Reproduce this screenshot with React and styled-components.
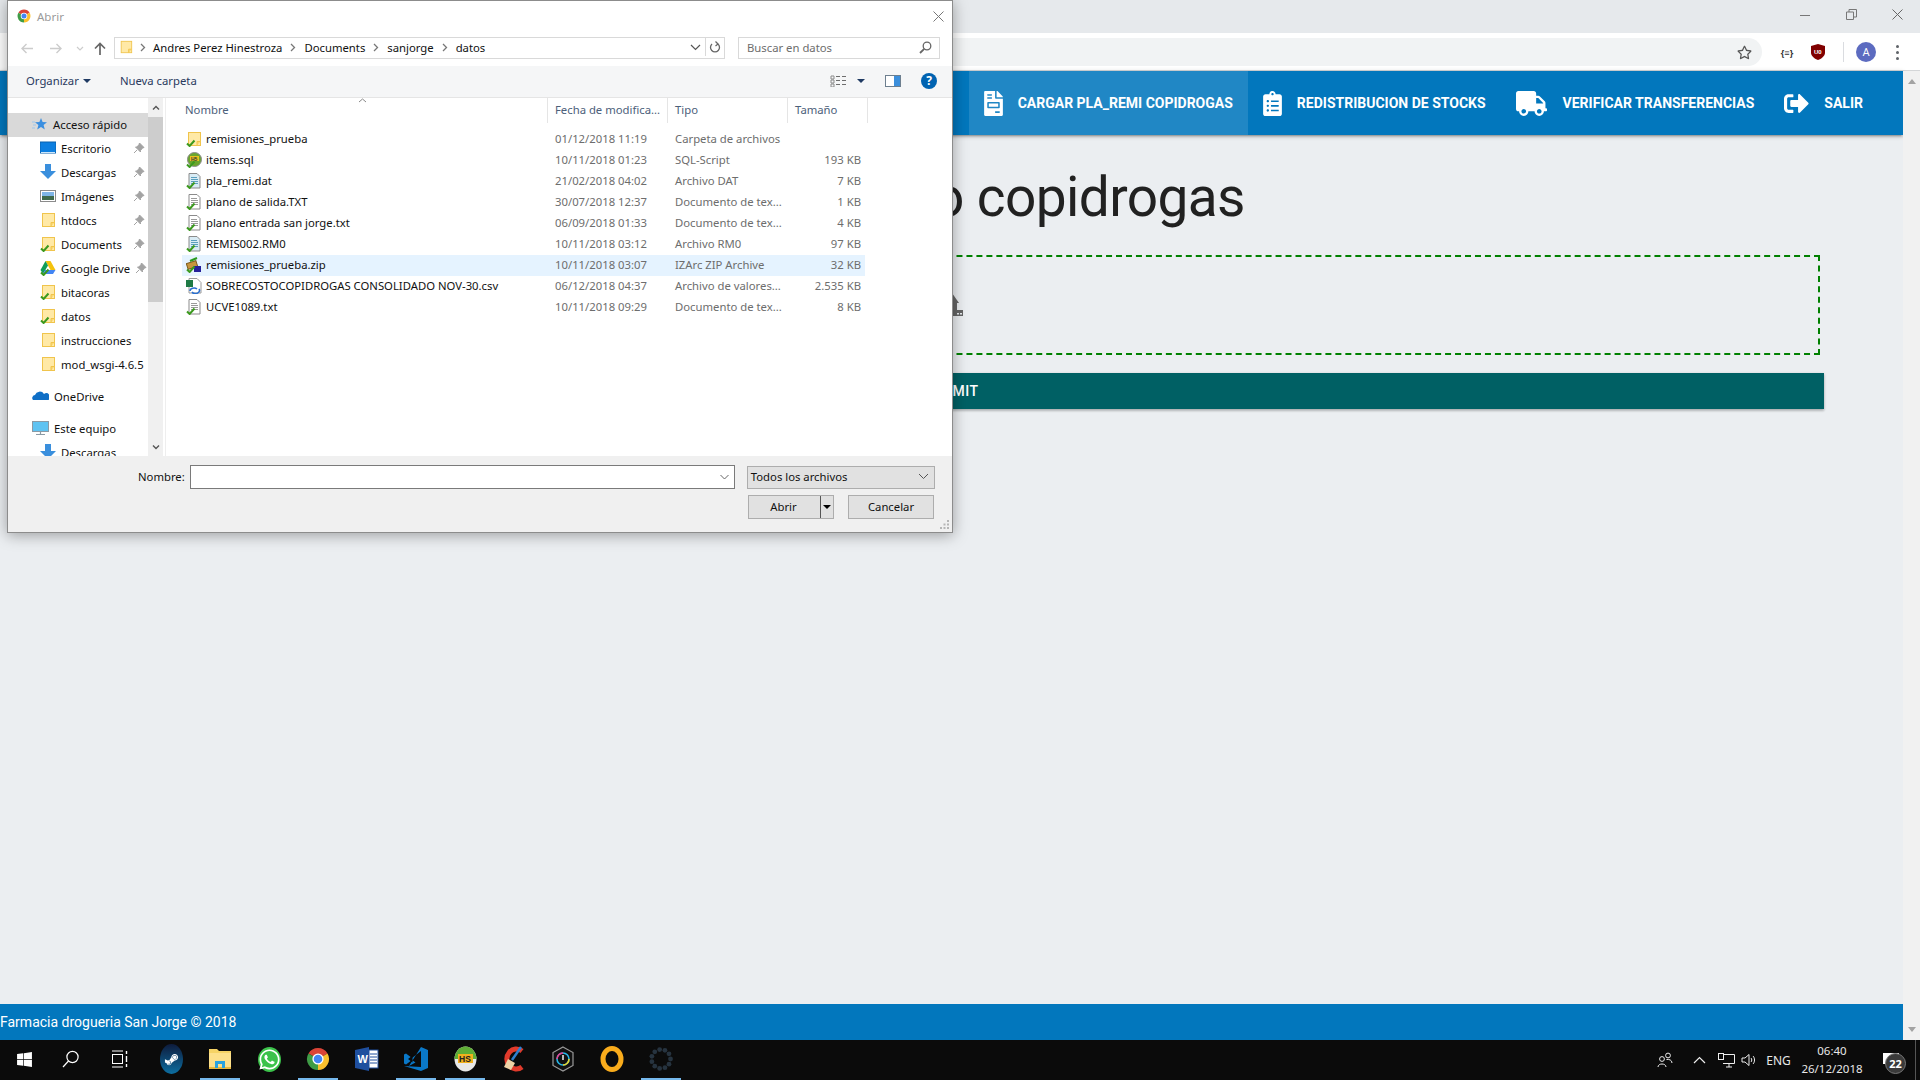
import React from "react"
import styled, { createGlobalStyle } from "styled-components"
import { FaFileInvoice, FaClipboardList, FaTruck, FaSignOutAlt, FaWindows, FaSteamSymbol, FaWhatsapp, FaRegStar } from "react-icons/fa"

const UI = `"Noto Sans", "Open Sans", sans-serif`
const WEB = `Roboto, "Liberation Sans", sans-serif`

const GlobalStyle = createGlobalStyle`
  html, body { margin: 0; padding: 0; overflow: hidden; }
  * { box-sizing: border-box; }
`

const Screen = styled.div`
  position: relative;
  width: 1920px;
  height: 1080px;
  display: flex;
  flex-direction: column;
  overflow: hidden;
  background: #ebeef1;
`

/* ---------- browser ---------- */
const TitleBar = styled.div`
  height: 33px;
  flex: none;
  background: #e6e9ec;
  display: flex;
  justify-content: flex-end;
  align-items: flex-start;
`
const WinButton = styled.div`
  width: 46px;
  height: 29px;
  display: flex;
  align-items: center;
  justify-content: center;
`
const BrowserBar = styled.div`
  height: 38px;
  flex: none;
  background: #fff;
  border-bottom: 1px solid #d4d6d8;
  display: flex;
  align-items: flex-start;
  padding: 5px 0 0 900px;
`
const Omnibox = styled.div`
  width: 862px;
  height: 28px;
  background: #f1f3f4;
  border-radius: 0 14px 14px 0;
  display: flex;
  align-items: center;
  justify-content: flex-end;
  padding-right: 10px;
`
const Extensions = styled.div`
  flex: 1;
  height: 28px;
  display: flex;
  align-items: center;
  padding-left: 18px;
`
const ExtSlot = styled.div`
  width: ${p => p.$w}px;
  display: flex;
  align-items: center;
  justify-content: center;
  flex: none;
`
const BraceText = styled.span`
  font: 700 9px ${UI};
  color: #333;
`
const BarDivider = styled.div`
  width: 1px;
  height: 20px;
  background: #dadce0;
  flex: none;
  margin: 0 12px 0 1px;
`
const Avatar = styled.div`
  width: 20px;
  height: 20px;
  border-radius: 50%;
  background: #5c6bc0;
  color: #fff;
  font: 400 11px ${WEB};
  display: flex;
  align-items: center;
  justify-content: center;
  flex: none;
`
const Kebab = styled.div`
  margin-left: 20px;
  display: flex;
  flex-direction: column;
  gap: 3px;
  span { width: 3px; height: 3px; border-radius: 50%; background: #5f6368; }
`

/* ---------- page ---------- */
const Viewport = styled.div`
  flex: 1;
  display: flex;
  min-height: 0;
`
const Page = styled.div`
  flex: 1;
  display: flex;
  flex-direction: column;
  font-family: ${WEB};
`
const Nav = styled.nav`
  height: 64px;
  flex: none;
  background: #0277bd;
  display: flex;
  justify-content: flex-end;
  padding-right: 25px;
  box-shadow: 0 2px 2px 0 rgba(0,0,0,.14), 0 3px 1px -2px rgba(0,0,0,.12), 0 1px 5px 0 rgba(0,0,0,.2);
`
const NavItem = styled.a`
  display: flex;
  align-items: center;
  gap: ${p => p.$gap}px;
  padding: 0 15px;
  color: #fff;
  font: 700 14px ${WEB};
  white-space: nowrap;
  background: ${p => (p.$active ? "rgba(255,255,255,.12)" : "transparent")};
  svg { height: 25px; width: ${p => p.$icon}px; flex: none; }
`
const Main = styled.main`
  flex: 1;
  padding: 0 79px;
`
const Heading = styled.h2`
  margin: 28px 0 0;
  font: 400 55px/68px ${WEB};
  letter-spacing: -0.6px;
  color: #212121;
  text-align: center;
`
const DropZone = styled.div`
  margin: 24px 4px 0 0;
  height: 100px;
  border: 2px dashed #008000;
  display: flex;
  align-items: center;
  justify-content: center;
  padding-left: 5px;
`
const Submit = styled.button`
  display: block;
  width: 100%;
  height: 36px;
  margin-top: 18px;
  border: none;
  background: #006064;
  color: #fff;
  font: 500 14px ${WEB};
  letter-spacing: .5px;
  box-shadow: 0 2px 2px 0 rgba(0,0,0,.14), 0 1px 3px 0 rgba(0,0,0,.2);
`
const Footer = styled.footer`
  height: 36px;
  flex: none;
  background: #0277bd;
  color: #fff;
  font: 400 14px ${WEB};
  display: flex;
  align-items: center;
`
const PageScroll = styled.div`
  width: 17px;
  flex: none;
  background: #f1f1f1;
  display: flex;
  flex-direction: column;
  align-items: center;
  justify-content: space-between;
  padding: 8px 0;
`
const ScrollArrow = styled.div`
  width: 0;
  height: 0;
  border-left: 4px solid transparent;
  border-right: 4px solid transparent;
  ${p => (p.$down ? "border-top: 5px solid #a3a3a3;" : "border-bottom: 5px solid #a3a3a3;")}
`

/* ---------- taskbar ---------- */
const Taskbar = styled.div`
  height: 40px;
  flex: none;
  background: #0b0b0b;
  display: flex;
  align-items: stretch;
  gap: 9px;
  padding-left: 4px;
  color: #e8e8e8;
  font: 400 12px ${UI};
`
const TaskButton = styled.div`
  width: 40px;
  flex: none;
  display: flex;
  align-items: center;
  justify-content: center;
  padding-right: ${p => p.$nudge || 0}px;
  border-bottom: 2px solid ${p => (p.$open ? "#76b9ed" : "transparent")};
`
const Tray = styled.div`
  margin-left: auto;
  display: flex;
  align-items: center;
  border-right: 1px solid #555;
  margin-right: 4px;
`
const TraySlot = styled.div`
  width: ${p => p.$w}px;
  flex: none;
  display: flex;
  align-items: center;
  justify-content: center;
  position: relative;
`
const Clock = styled.div`
  width: 70px;
  flex: none;
  text-align: center;
  font-size: 11.5px;
  line-height: 18px;
`
const Badge = styled.div`
  position: absolute;
  left: 18px;
  top: 0;
  width: 21px;
  height: 21px;
  border-radius: 50%;
  background: #3a3a3a;
  border: 1px solid #777;
  color: #fff;
  font: 700 11px/19px ${UI};
  text-align: center;
`

/* ---------- dialog ---------- */
const Dialog = styled.div`
  position: absolute;
  left: 7px;
  top: 0;
  width: 946px;
  height: 533px;
  background: #fff;
  border: 1px solid #8c8c8c;
  box-shadow: 0 2px 14px rgba(0,0,0,.35);
  display: flex;
  flex-direction: column;
  font: 400 11.3px ${UI};
  color: #111;
`
const DialogTitle = styled.div`
  height: 32px;
  flex: none;
  display: flex;
  align-items: center;
  padding: 0 8px 2px 9px;
  gap: 6px;
  color: #9a9a9a;
  font-size: 11.5px;
`
const CloseMark = styled.div`
  margin-left: auto;
  display: flex;
`
const AddressRow = styled.div`
  height: 33px;
  flex: none;
  display: flex;
  align-items: flex-start;
  padding-top: 4px;
`
const NavArrows = styled.div`
  width: 106px;
  height: 22px;
  flex: none;
  display: flex;
  align-items: center;
  padding-left: 10px;
`
const ArrowSlot = styled.div`
  width: ${p => p.$w}px;
  flex: none;
  display: flex;
  align-items: center;
  justify-content: center;
`
const Crumbs = styled.div`
  width: 611px;
  height: 22px;
  flex: none;
  border: 1px solid #d9d9d9;
  display: flex;
  align-items: center;
  padding: 0 0 2px 4px;
`
const CrumbSep = styled.div`
  width: ${p => p.$w || 22}px;
  flex: none;
  display: flex;
  justify-content: center;
`
const CrumbTail = styled.div`
  margin-left: auto;
  display: flex;
  align-items: center;
  height: 100%;
`
const CrumbTool = styled.div`
  width: ${p => p.$w}px;
  height: 100%;
  display: flex;
  align-items: center;
  justify-content: center;
  border-left: ${p => (p.$line ? "1px solid #d9d9d9" : "none")};
`
const SearchBox = styled.div`
  width: 202px;
  height: 22px;
  flex: none;
  margin-left: 13px;
  border: 1px solid #d9d9d9;
  display: flex;
  align-items: center;
  justify-content: space-between;
  padding: 0 7px 2px 8px;
  color: #6d6d6d;
`
const CommandBar = styled.div`
  height: 32px;
  flex: none;
  background: #f5f6f7;
  border-bottom: 1px solid #e5e5e5;
  display: flex;
  align-items: center;
  padding: 0 0 2px 18px;
  color: #2a3a5e;
`
const CommandLabel = styled.span`
  display: flex;
  align-items: center;
  gap: 4px;
  margin-right: ${p => p.$mr || 0}px;
`
const CommandTools = styled.div`
  margin-left: auto;
  display: flex;
  align-items: center;
  padding-right: 15px;
`
const DownCaret = styled.span`
  width: 0;
  height: 0;
  border-left: 4px solid transparent;
  border-right: 4px solid transparent;
  border-top: 4px solid ${p => p.$color || "#1f3a63"};
`
const HelpDot = styled.div`
  width: 16px;
  height: 16px;
  border-radius: 50%;
  background: #0063b1;
  color: #fff;
  font: 700 12px/16px ${UI};
  text-align: center;
`
const Middle = styled.div`
  flex: 1;
  display: flex;
  min-height: 0;
`
const Sidebar = styled.div`
  width: 140px;
  flex: none;
  overflow: hidden;
  padding-top: 15px;
`
const SideRow = styled.div`
  height: 24px;
  display: flex;
  align-items: center;
  white-space: nowrap;
  gap: 5px;
  padding: 0 3px 2px ${p => (p.$child ? 32 : 24)}px;
  margin-top: ${p => p.$gap || 0}px;
  background: ${p => (p.$on ? "#d9d9d9" : "transparent")};
  color: #111;
  svg { flex: none; }
`
const PinSlot = styled.span`
  margin-left: auto;
  display: flex;
`
const SideScroll = styled.div`
  width: 15px;
  flex: none;
  background: #f0f0f0;
  display: flex;
  flex-direction: column;
  align-items: center;
  justify-content: space-between;
  padding-bottom: 5px;
`
const SideThumb = styled.div`
  width: 15px;
  height: 185px;
  background: #cdcdcd;
`
const ThumbGroup = styled.div`
  display: flex;
  flex-direction: column;
  align-items: center;
  gap: 5px;
  padding-top: 6px;
`
const Chevron = styled.div`
  display: flex;
`
const FilePane = styled.div`
  flex: 1;
  margin-left: 2px;
  border-left: 1px solid #eeeeee;
  min-width: 0;
`
const ColHeads = styled.div`
  height: 25px;
  display: grid;
  grid-template-columns: 382px 120px 120px 80px;
  color: #4c607a;
`
const ColHead = styled.div`
  position: relative;
  display: flex;
  align-items: center;
  padding: 0 0 2px ${p => p.$pad || 7}px;
  border-right: 1px solid #e5e5e5;
  white-space: nowrap;
`
const SortMark = styled.div`
  position: absolute;
  left: 192px;
  top: 0;
  display: flex;
`
const FileList = styled.div`
  padding: 6px 0 0 16px;
`
const FileRow = styled.div`
  width: 683px;
  height: 21px;
  display: grid;
  grid-template-columns: 369px 120px 120px 66px;
  align-items: center;
  padding: 0 0 2px 4px;
  background: ${p => (p.$sel ? "#e5f3ff" : "transparent")};
  white-space: nowrap;
`
const NameCell = styled.div`
  display: flex;
  align-items: center;
  gap: 4px;
  color: #111;
`
const Muted = styled.div`
  color: #6d6d6d;
  text-align: ${p => (p.$right ? "right" : "left")};
`
const BottomPanel = styled.div`
  height: 76px;
  flex: none;
  background: #f0f0f0;
  position: relative;
  padding: 9px 0 0 130px;
`
const NameLine = styled.div`
  display: flex;
  align-items: center;
  gap: 5px;
`
const NameLabel = styled.span`
  padding-bottom: 2px;
`
const NameInput = styled.div`
  width: 545px;
  height: 24px;
  background: #fff;
  border: 1px solid #7a7a7a;
  display: flex;
  align-items: center;
  justify-content: flex-end;
  padding-right: 5px;
`
const TypeSelect = styled.div`
  width: 188px;
  height: 23px;
  margin-left: 7px;
  background: #e1e1e1;
  border: 1px solid #adadad;
  display: flex;
  align-items: center;
  justify-content: space-between;
  padding: 0 5px 2px 3px;
`
const ButtonLine = styled.div`
  display: flex;
  justify-content: flex-end;
  gap: 14px;
  margin-top: 6px;
  padding-right: 18px;
`
const DlgButton = styled.div`
  width: 86px;
  height: 24px;
  background: #e1e1e1;
  border: 1px solid #adadad;
  display: flex;
  align-items: center;
  justify-content: center;
  padding-bottom: ${p => (p.$split ? 0 : 2)}px;
`
const SplitLabel = styled.div`
  flex: 1;
  text-align: center;
  padding: 0 2px 2px 0;
`
const SplitArrow = styled.div`
  width: 13px;
  height: 100%;
  border-left: 1px solid #555;
  display: flex;
  align-items: center;
  justify-content: center;
`
const Grip = styled.div`
  position: absolute;
  right: 2px;
  bottom: 2px;
  display: flex;
`

/* ---------- small drawings ---------- */
const Check = () => (
  <path d="M1 12.5 L3.6 15 L8.5 9.5" fill="none" stroke="#3c9a1f" strokeWidth="2" />
)

const Folder = ({ check, size = 16 }) => (
  <svg width={size} height={size} viewBox="0 0 16 16">
    <rect x="2.5" y="1.5" width="12" height="13" fill="#ffe9a6" stroke="#f0c44c" />
    <path d="M11 14.5 V10.5 H14.5" fill="#fbd872" stroke="#f0c44c" />
    {check && <Check />}
  </svg>
)

const Doc = ({ tone = "plain" }) => (
  <svg width="16" height="16" viewBox="0 0 16 16">
    <path d="M3 .5 H11 L14 3.5 V15 H3 Z" fill={tone === "plain" ? "#fff" : "#d9ecf5"} stroke="#8b8b8b" />
    <path d="M5 4.500 H11 M5 6.500 H12 M5 8.500 H12 M5 10.500 H12" stroke={tone === "plain" ? "#9a9a9a" : "#5a9fbe"} />
    <Check />
  </svg>
)

const SqlIcon = () => (
  <svg width="16" height="16" viewBox="0 0 16 16">
    <circle cx="8.5" cy="7.5" r="7" fill="#6aa52c" stroke="#8b8b8b" />
    <rect x="4" y="4" width="9" height="5" fill="#e9c21c" />
    <text x="5" y="8.5" fontSize="5" fontFamily="Liberation Sans" fontWeight="700" fill="#333">H5</text>
    <Check />
  </svg>
)

const ZipIcon = () => (
  <svg width="16" height="16" viewBox="0 0 16 16">
    <rect x="1" y="5" width="10" height="6" fill="#c8963e" stroke="#7b5a1d" transform="rotate(-18 6 8)" />
    <rect x="8" y="9" width="7" height="6" fill="#25209b" />
    <path d="M4 4 L11 1" stroke="#2b9a1f" strokeWidth="2" />
    <Check />
  </svg>
)

const CsvIcon = () => (
  <svg width="16" height="16" viewBox="0 0 16 16">
    <path d="M3 .5 H11 L15 4.5 V15 H3 Z" fill="#fff" stroke="#9a9a9a" />
    <rect x="0" y="2" width="7" height="7" fill="#1f7a45" />
    <path d="M4 13 a4 3 0 0 1 7 -2 M13 11 a4 3 0 0 1 -7 3" fill="none" stroke="#2a6fd0" strokeWidth="1.6" />
  </svg>
)

const fileIcons = { folder: <Folder check />, sql: <SqlIcon />, dat: <Doc tone="blue" />, txt: <Doc />, zip: <ZipIcon />, csv: <CsvIcon /> }

const ChromeLogo = ({ size }) => (
  <svg width={size} height={size} viewBox="0 0 24 24">
    <path d="M12 12 L2.47 6.5 A11 11 0 0 1 21.53 6.5 Z" fill="#db4437" />
    <path d="M12 12 L21.53 6.5 A11 11 0 0 1 12 23 Z" fill="#fbc02d" />
    <path d="M12 12 L12 23 A11 11 0 0 1 2.47 6.5 Z" fill="#3f9c46" />
    <circle cx="12" cy="12" r="5.6" fill="#fff" />
    <circle cx="12" cy="12" r="4.3" fill="#4285f4" />
  </svg>
)

const Stroke = ({ w = 16, h = 16, d, color = "#666", sw = 1.2 }) => (
  <svg width={w} height={h} viewBox={`0 0 ${w} ${h}`}>
    <path d={d} fill="none" stroke={color} strokeWidth={sw} />
  </svg>
)

const Pin = () => (
  <svg width="12" height="12" viewBox="0 0 12 12">
    <path d="M6.5 1 L11 5.5 L9.5 6 L7.5 8.5 L7.5 10 L2.5 5 L4 5 L6 2.5 Z M4 8 L1 11" fill="#a3a3a3" stroke="#a3a3a3" />
  </svg>
)

const QuickStar = () => (
  <svg width="16" height="16" viewBox="0 0 16 16">
    <path d="M9 2 L10.6 6 L15 6.3 L11.6 9 L12.8 13.5 L9 11 L5.2 13.5 L6.4 9 L3 6.3 L7.4 6 Z" fill="#3b8fe0" />
    <path d="M0 6 H3 M1 9 H4 M0 12 H3" stroke="#9cc7ee" />
  </svg>
)
const DesktopIcon = () => (
  <svg width="16" height="16" viewBox="0 0 16 16">
    <rect x="0" y="2" width="16" height="11" fill="#0d7fe0" stroke="#0a62ad" />
    <rect x="1" y="12" width="14" height="1" fill="#cde6fa" />
  </svg>
)
const DownloadIcon = () => (
  <svg width="16" height="16" viewBox="0 0 16 16">
    <path d="M5 0 H11 V7 H16 L8 15 L0 7 H5 Z" fill="#3a8fdd" />
  </svg>
)
const ImagesIcon = () => (
  <svg width="16" height="16" viewBox="0 0 16 16">
    <rect x="0.5" y="2.5" width="15" height="11" fill="#fff" stroke="#8b8b8b" />
    <rect x="2" y="4" width="12" height="4" fill="#7fb5e6" />
    <rect x="2" y="8" width="12" height="4" fill="#3f6a4c" />
  </svg>
)
const DriveIcon = () => (
  <svg width="16" height="16" viewBox="0 0 16 16">
    <path d="M5.5 1 H10.500 L15.500 10 H10.500 Z" fill="#f4c20d" />
    <path d="M5.5 1 L8 5.5 L3 14 L0.5 10 Z" fill="#0f9d58" />
    <path d="M5 10 H15.500 L13 14 H3 Z" fill="#4285f4" />
    <Check />
  </svg>
)
const CloudIcon = () => (
  <svg width="17" height="16" viewBox="0 0 17 16">
    <path d="M1 12 a3 3 0 0 1 2 -5 a5 5 0 0 1 9 -1 a3.500 3.500 0 0 1 4.500 6 Z" fill="#0f6fc6" />
  </svg>
)
const PcIcon = () => (
  <svg width="17" height="16" viewBox="0 0 17 16">
    <rect x="0.5" y="1.5" width="16" height="10" fill="#5fc3f2" stroke="#8b9aa5" />
    <path d="M8.500 12 V14 M4 14.500 H13" stroke="#8b9aa5" strokeWidth="1.2" />
  </svg>
)

const ViewIcon = () => (
  <svg width="16" height="12" viewBox="0 0 16 12">
    <path d="M1 1 H4 V4 H1 Z M1 5 H4 V8 H1 Z M1 9 H4 V12 H1 Z" fill="none" stroke="#8b8b8b" />
    <path d="M6 1.500 H10 M12 1.500 H16 M6 5.500 H10 M12 5.500 H16 M6 9.500 H10 M12 9.500 H16" stroke="#6d6d6d" />
  </svg>
)
const PaneIcon = () => (
  <svg width="16" height="12" viewBox="0 0 16 12">
    <rect x="0.5" y="0.5" width="15" height="11" fill="#fff" stroke="#6d7f8f" />
    <rect x="9" y="1" width="6" height="10" fill="#3c8fdc" />
  </svg>
)

const SearchGlyph = () => (
  <svg width="13" height="13" viewBox="0 0 13 13">
    <circle cx="8" cy="5" r="3.8" fill="none" stroke="#666" strokeWidth="1.3" />
    <path d="M5.2 7.8 L1 12" stroke="#666" strokeWidth="1.8" />
  </svg>
)

/* taskbar drawings */
const TaskSearch = () => (
  <svg width="18" height="18" viewBox="0 0 18 18">
    <circle cx="10.5" cy="7" r="5.6" fill="none" stroke="#fff" strokeWidth="1.2" />
    <path d="M6.5 11 L1 17" stroke="#fff" strokeWidth="1.2" />
  </svg>
)
const TaskView = () => (
  <svg width="17" height="18" viewBox="0 0 17 18">
    <path d="M1 1 H12 M1 17 H12" stroke="#fff" />
    <rect x="1.5" y="4.5" width="10" height="9" fill="none" stroke="#fff" />
    <path d="M15.5 1 V4 M15.5 6 V12 M15.5 14 V17" stroke="#fff" strokeWidth="1.4" />
  </svg>
)
const SteamBadge = styled.div`
  width: 23px;
  height: 30px;
  border-radius: 50%;
  background: linear-gradient(#0e1b3c, #0c6ea0);
  display: flex;
  align-items: center;
  justify-content: center;
  color: #fff;
  font-size: 15px;
`
const ExplorerIcon = () => (
  <svg width="22" height="24" viewBox="0 0 22 24">
    <path d="M0 2 H8 L10 4 H22 V22 H0 Z" fill="#f6d365" />
    <rect x="0" y="6" width="22" height="16" fill="#fde08a" />
    <rect x="0" y="20" width="22" height="2" fill="#e8b93f" />
    <path d="M6 21 V14 H16 V21 H13 V17 H9 V21 Z" fill="#2aa3e0" />
  </svg>
)
const WhatsBadge = styled.div`
  width: 23px;
  height: 25px;
  border-radius: 50%;
  background: #3bc24a;
  color: #fff;
  font-size: 23px;
  display: flex;
  align-items: center;
  justify-content: center;
`
const WordIcon = () => (
  <svg width="24" height="24" viewBox="0 0 24 24">
    <path d="M0 3 L14 0 V24 L0 21 Z" fill="#1f4f9e" />
    <rect x="14" y="3" width="9" height="18" fill="#fff" stroke="#1f4f9e" />
    <path d="M15 7 H22 M15 10 H22 M15 13 H22 M15 16 H22" stroke="#1f4f9e" />
    <text x="2.5" y="16" fontSize="11" fontFamily="Liberation Sans" fontWeight="700" fill="#fff">W</text>
  </svg>
)
const CodeIcon = () => (
  <svg width="24" height="24" viewBox="0 0 24 24">
    <path d="M17 0 L24 3 V21 L17 24 L0 19 L17 20 V4 L8 11 L2 6.5 L0 7.5 V16.5 L2 17.5 L8 13 L11.5 15.5 L5 19" fill="#0a78c8" stroke="none" />
    <path d="M4 12 L8.5 8.5 V15.5 Z" fill="#0b0b0b" />
  </svg>
)
const HsIcon = () => (
  <svg width="23" height="26" viewBox="0 0 23 26">
    <ellipse cx="11.5" cy="13" rx="11" ry="12.5" fill="#e8e8e8" />
    <path d="M.5 13 A11 12.5 0 0 1 22.5 13 Z" fill="#5fae36" />
    <rect x="4" y="8" width="15" height="9" fill="#f2b11d" />
    <text x="5" y="15.6" fontSize="8.5" fontFamily="Liberation Sans" fontWeight="700" fill="#222">HS</text>
  </svg>
)
const CleanerIcon = () => (
  <svg width="22" height="26" viewBox="0 0 22 26">
    <path d="M19 5 A9.5 10 0 1 0 19 21" fill="none" stroke="#e13a2b" strokeWidth="5" />
    <path d="M18 1 L9 14" stroke="#2e7fd0" strokeWidth="2.5" />
    <path d="M5 13 L12 17 L8 24 L1 21 Z" fill="#efd3a6" />
  </svg>
)
const CorsairIcon = () => (
  <svg width="22" height="26" viewBox="0 0 22 26">
    <path d="M11 1 L21 6.5 V19.5 L11 25 L1 19.5 V6.5 Z" fill="#111" stroke="#9a9a9a" strokeWidth="1.2" />
    <circle cx="11" cy="13" r="6" fill="none" stroke="#28b6e8" strokeWidth="1.6" />
    <path d="M5 13 A6 6 0 0 1 11 7" fill="none" stroke="#e8408f" strokeWidth="1.6" />
    <path d="M11 19 A6 6 0 0 0 17 13" fill="none" stroke="#e8d52c" strokeWidth="1.6" />
    <path d="M11 9 V14" stroke="#fff" strokeWidth="1.4" />
  </svg>
)
const RingIcon = () => (
  <svg width="24" height="26" viewBox="0 0 24 26">
    <ellipse cx="12" cy="13" rx="9" ry="10.5" fill="none" stroke="#f9ac1c" strokeWidth="5" />
  </svg>
)
const SpinnerIcon = () => (
  <svg width="24" height="24" viewBox="0 0 24 24">
    {[...Array(11)].map((_, i) => {
      const a = (i / 11) * Math.PI * 2
      return <circle key={i} cx={12 + 9.5 * Math.cos(a)} cy={12 + 9.5 * Math.sin(a)} r="2.4" fill="#26333f" />
    })}
  </svg>
)

/* tray drawings */
const PeopleIcon = () => (
  <svg width="16" height="16" viewBox="0 0 16 16">
    <circle cx="5" cy="7" r="2.4" fill="none" stroke="#eee" />
    <path d="M1 15 C1 11 9 11 9 15" fill="none" stroke="#eee" />
    <circle cx="11" cy="3.5" r="2.4" fill="none" stroke="#eee" />
    <path d="M9.5 7.5 C12 7 15 8 15 11" fill="none" stroke="#eee" />
  </svg>
)
const NetIcon = () => (
  <svg width="17" height="15" viewBox="0 0 17 15">
    <path d="M4 1.5 H16.5 V10.5 H5 M8 14 H14 M11 10.5 V14" fill="none" stroke="#eee" />
    <rect x="0.5" y="0.5" width="5" height="6" fill="#0b0b0b" stroke="#eee" />
  </svg>
)
const VolumeIcon = () => (
  <svg width="16" height="14" viewBox="0 0 16 14">
    <path d="M1 5 H4 L8 1.5 V12.5 L4 9 H1 Z M10 5 C11 6 11 8 10 9 M12 3 C14 5 14 9 12 11" fill="none" stroke="#eee" />
  </svg>
)

const sideRows = [
  { label: "Acceso rápido", icon: <QuickStar />, on: true },
  { label: "Escritorio", icon: <DesktopIcon />, child: true, pin: true },
  { label: "Descargas", icon: <DownloadIcon />, child: true, pin: true },
  { label: "Imágenes", icon: <ImagesIcon />, child: true, pin: true },
  { label: "htdocs", icon: <Folder />, child: true, pin: true },
  { label: "Documents", icon: <Folder check />, child: true, pin: true },
  { label: "Google Drive", icon: <DriveIcon />, child: true, pin: true },
  { label: "bitacoras", icon: <Folder check />, child: true },
  { label: "datos", icon: <Folder check />, child: true },
  { label: "instrucciones", icon: <Folder />, child: true },
  { label: "mod_wsgi-4.6.5", icon: <Folder />, child: true },
  { label: "OneDrive", icon: <CloudIcon />, gap: 8 },
  { label: "Este equipo", icon: <PcIcon />, gap: 8 },
  { label: "Descargas", icon: <DownloadIcon />, child: true },
]

const files = [
  { name: "remisiones_prueba", icon: "folder", date: "01/12/2018 11:19", type: "Carpeta de archivos", size: "" },
  { name: "items.sql", icon: "sql", date: "10/11/2018 01:23", type: "SQL-Script", size: "193 KB" },
  { name: "pla_remi.dat", icon: "dat", date: "21/02/2018 04:02", type: "Archivo DAT", size: "7 KB" },
  { name: "plano de salida.TXT", icon: "txt", date: "30/07/2018 12:37", type: "Documento de tex...", size: "1 KB" },
  { name: "plano entrada san jorge.txt", icon: "txt", date: "06/09/2018 01:33", type: "Documento de tex...", size: "4 KB" },
  { name: "REMIS002.RM0", icon: "dat", date: "10/11/2018 03:12", type: "Archivo RM0", size: "97 KB" },
  { name: "remisiones_prueba.zip", icon: "zip", date: "10/11/2018 03:07", type: "IZArc ZIP Archive", size: "32 KB", sel: true },
  { name: "SOBRECOSTOCOPIDROGAS CONSOLIDADO NOV-30.csv", icon: "csv", date: "06/12/2018 04:37", type: "Archivo de valores...", size: "2.535 KB" },
  { name: "UCVE1089.txt", icon: "txt", date: "10/11/2018 09:29", type: "Documento de tex...", size: "8 KB" },
]

const crumbs = ["Andres Perez Hinestroza", "Documents", "sanjorge", "datos"]

const taskItems = [
  { icon: <FaWindows size={17} color="#fff" /> },
  { icon: <TaskSearch />, nudge: 4 },
  { icon: <TaskView />, nudge: 6 },
  { icon: <SteamBadge><FaSteamSymbol /></SteamBadge> },
  { icon: <ExplorerIcon />, open: true },
  { icon: <WhatsBadge><FaWhatsapp /></WhatsBadge> },
  { icon: <ChromeLogo size={24} />, open: true },
  { icon: <WordIcon /> },
  { icon: <CodeIcon />, open: true },
  { icon: <HsIcon />, open: true },
  { icon: <CleanerIcon /> },
  { icon: <CorsairIcon /> },
  { icon: <RingIcon /> },
  { icon: <SpinnerIcon />, open: true },
]

const smallChevron = <Stroke w={8} h={8} d="M1 5.5 L4 2.5 L7 5.5" color="#555" sw={1.4} />
const crumbArrow = <Stroke w={6} h={9} d="M1 1 L4.5 4.5 L1 8" color="#777" sw={1.3} />
const downChevron = <Stroke w={11} h={7} d="M1 1 L5.5 5.5 L10 1" color="#555" sw={1.2} />

export default function App() {
  return (
    <Screen>
      <GlobalStyle />
      <TitleBar>
        <WinButton><Stroke w={10} h={10} d="M0 5.5 H10" color="#777" sw={1} /></WinButton>
        <WinButton><Stroke w={11} h={11} d="M.5 3 H7.5 V10.5 H.5 Z M3 3 V.5 H10.5 V8 H7.5" color="#777" sw={1} /></WinButton>
        <WinButton><Stroke w={11} h={11} d="M.5 .5 L10.5 10.5 M10.5 .5 L.5 10.5" color="#666" sw={1} /></WinButton>
      </TitleBar>
      <BrowserBar>
        <Omnibox><FaRegStar size={15} color="#555" /></Omnibox>
        <Extensions>
          <ExtSlot $w={14}><BraceText>{"{≡}"}</BraceText></ExtSlot>
          <ExtSlot $w={48}>
            <svg width="14" height="16" viewBox="0 0 14 16">
              <path d="M7 0 L14 2 V9 C14 12 10 15 7 16 C4 15 0 12 0 9 V2 Z" fill="#800000" />
              <text x="3" y="9.5" fontSize="6" fontFamily="Liberation Sans" fontWeight="700" fill="#fff">U0</text>
            </svg>
          </ExtSlot>
          <BarDivider />
          <Avatar>A</Avatar>
          <Kebab><span /><span /><span /></Kebab>
        </Extensions>
      </BrowserBar>

      <Viewport>
        <Page>
          <Nav>
            <NavItem $active $gap={15} $icon={19}><FaFileInvoice />CARGAR PLA_REMI COPIDROGAS</NavItem>
            <NavItem $gap={15} $icon={19}><FaClipboardList />REDISTRIBUCION DE STOCKS</NavItem>
            <NavItem $gap={16} $icon={31}><FaTruck />VERIFICAR TRANSFERENCIAS</NavItem>
            <NavItem $gap={15} $icon={25}><FaSignOutAlt />SALIR</NavItem>
          </Nav>
          <Main>
            <Heading>Cargar plano copidrogas</Heading>
            <DropZone>
              <svg width="24" height="24" viewBox="0 0 24 24">
                <path d="M12 0 L19 10 H17 V17 H7 V10 H5 Z M1 17 H23 V23 H1 Z" fill="#666" />
                <path d="M17 20 H19 V21.500 H17 Z M20 20 H22 V21.500 H20 Z" fill="#eaeef1" />
              </svg>
            </DropZone>
            <Submit>SUBMIT</Submit>
          </Main>
          <Footer>Farmacia drogueria San Jorge © 2018</Footer>
        </Page>
        <PageScroll>
          <ScrollArrow />
          <ScrollArrow $down />
        </PageScroll>
      </Viewport>

      <Taskbar>
        {taskItems.map((t, i) => <TaskButton key={i} $open={t.open} $nudge={t.nudge}>{t.icon}</TaskButton>)}
        <Tray>
          <TraySlot $w={41}><PeopleIcon /></TraySlot>
          <TraySlot $w={29}><Stroke w={13} h={8} d="M1 7 L6.5 1.5 L12 7" color="#eee" sw={1.2} /></TraySlot>
          <TraySlot $w={24}><NetIcon /></TraySlot>
          <TraySlot $w={22}><VolumeIcon /></TraySlot>
          <TraySlot $w={37}>ENG</TraySlot>
          <Clock>06:40<br />26/12/2018</Clock>
          <TraySlot $w={48}>
            <svg width="16" height="14" viewBox="0 0 16 14">
              <path d="M0 0 H16 V11 H8 L5 14 V11 H0 Z" fill="#fff" />
            </svg>
            <Badge>22</Badge>
          </TraySlot>
        </Tray>
      </Taskbar>

      <Dialog>
        <DialogTitle>
          <ChromeLogo size={14} />
          Abrir
          <CloseMark><Stroke w={11} h={11} d="M.5 .5 L10.5 10.5 M10.5 .5 L.5 10.5" color="#777" sw={1} /></CloseMark>
        </DialogTitle>
        <AddressRow>
          <NavArrows>
            <ArrowSlot $w={18}><Stroke w={13} h={11} d="M12 5.5 H1 M5.5 1 L1 5.5 L5.5 10" color="#ccc" sw={1.4} /></ArrowSlot>
            <ArrowSlot $w={38}><Stroke w={13} h={11} d="M1 5.5 H12 M7.5 1 L12 5.5 L7.5 10" color="#ccc" sw={1.4} /></ArrowSlot>
            <ArrowSlot $w={12}><Stroke w={8} h={5} d="M1 1 L4 4 L7 1" color="#ccc" sw={1.2} /></ArrowSlot>
            <ArrowSlot $w={28}><Stroke w={12} h={13} d="M6 13 V1.5 M1 6.5 L6 1.5 L11 6.5" color="#666" sw={1.7} /></ArrowSlot>
          </NavArrows>
          <Crumbs>
            <Folder size={14} />
            <CrumbSep $w={20}>{crumbArrow}</CrumbSep>
            {crumbs.map((c, i) => (
              <React.Fragment key={c}>
                {i > 0 && <CrumbSep>{crumbArrow}</CrumbSep>}
                <span>{c}</span>
              </React.Fragment>
            ))}
            <CrumbTail>
              <CrumbTool $w={19}>{downChevron}</CrumbTool>
              <CrumbTool $w={19} $line>
                <Stroke w={12} h={12} d="M3 3 A4.5 4.5 0 1 0 9 3 M6.5 .5 L9 3 L6.5 5" color="#666" sw={1.3} />
              </CrumbTool>
            </CrumbTail>
          </Crumbs>
          <SearchBox>Buscar en datos<SearchGlyph /></SearchBox>
        </AddressRow>
        <CommandBar>
          <CommandLabel $mr={29}>Organizar<DownCaret /></CommandLabel>
          <CommandLabel>Nueva carpeta</CommandLabel>
          <CommandTools>
            <ViewIcon />
            <ArrowSlot $w={29}><DownCaret /></ArrowSlot>
            <ArrowSlot $w={10} />
            <ArrowSlot $w={16}><PaneIcon /></ArrowSlot>
            <ArrowSlot $w={20} />
            <HelpDot>?</HelpDot>
          </CommandTools>
        </CommandBar>
        <Middle>
          <Sidebar>
            {sideRows.map((r, i) => (
              <SideRow key={i} $child={r.child} $on={r.on} $gap={r.gap}>
                {r.icon}
                {r.label}
                {r.pin && <PinSlot><Pin /></PinSlot>}
              </SideRow>
            ))}
          </Sidebar>
          <SideScroll>
            <ThumbGroup>
              <Chevron>{smallChevron}</Chevron>
              <SideThumb />
            </ThumbGroup>
            <Chevron>
              <Stroke w={8} h={8} d="M1 2.5 L4 5.5 L7 2.5" color="#555" sw={1.4} />
            </Chevron>
          </SideScroll>
          <FilePane>
            <ColHeads>
              <ColHead $pad={19}>
                Nombre
                <SortMark><Stroke w={9} h={5} d="M1 4 L4.5 1 L8 4" color="#888" sw={1} /></SortMark>
              </ColHead>
              <ColHead>Fecha de modifica...</ColHead>
              <ColHead>Tipo</ColHead>
              <ColHead>Tamaño</ColHead>
            </ColHeads>
            <FileList>
              {files.map(f => (
                <FileRow key={f.name} $sel={f.sel}>
                  <NameCell>{fileIcons[f.icon]}{f.name}</NameCell>
                  <Muted>{f.date}</Muted>
                  <Muted>{f.type}</Muted>
                  <Muted $right>{f.size}</Muted>
                </FileRow>
              ))}
            </FileList>
          </FilePane>
        </Middle>
        <BottomPanel>
          <NameLine>
            <NameLabel>Nombre:</NameLabel>
            <NameInput><Stroke w={9} h={6} d="M.5 1 L4.5 5 L8.5 1" color="#666" sw={1} /></NameInput>
            <TypeSelect>Todos los archivos<Stroke w={11} h={7} d="M1 1 L5.5 5.5 L10 1" color="#555" sw={1} /></TypeSelect>
          </NameLine>
          <ButtonLine>
            <DlgButton $split>
              <SplitLabel>Abrir</SplitLabel>
              <SplitArrow><DownCaret $color="#000" /></SplitArrow>
            </DlgButton>
            <DlgButton>Cancelar</DlgButton>
          </ButtonLine>
          <Grip>
            <svg width="11" height="11" viewBox="0 0 11 11">
              <path d="M8 1 h2 v2 h-2 Z M4.500 4.500 h2 v2 h-2 Z M8 4.500 h2 v2 h-2 Z M1 8 h2 v2 h-2 Z M4.500 8 h2 v2 h-2 Z M8 8 h2 v2 h-2 Z" fill="#b5b5b5" />
            </svg>
          </Grip>
        </BottomPanel>
      </Dialog>
    </Screen>
  )
}
